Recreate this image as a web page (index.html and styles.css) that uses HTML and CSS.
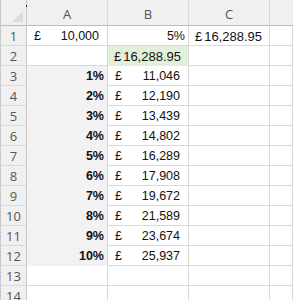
FILE: index.html
```html
<!DOCTYPE html>
<html>
<head>
<meta charset="utf-8">
<link rel="stylesheet" href="styles.css">
</head>
<body>
<div class="sheet">
  <div class="corner"><span class="dot"></span><span class="tri"></span></div>
  <div class="ch">A</div><div class="ch">B</div><div class="ch">C</div><div class="ch last"></div>

  <div class="rh">1</div>
  <div class="c acc"><span>£</span><span>10,000</span></div>
  <div class="c num pct">5%</div>
  <div class="c acc wide"><span>£</span><span>16,288.95</span></div>
  <div class="c"></div>

  <div class="rh">2</div>
  <div class="c"></div>
  <div class="c acc wide green"><span>£</span><span>16,288.95</span></div>
  <div class="c"></div>
  <div class="c"></div>

  <div class="rh">3</div><div class="c rate">1%</div><div class="c acc"><span>£</span><span>11,046</span></div><div class="c"></div><div class="c"></div>
  <div class="rh">4</div><div class="c rate">2%</div><div class="c acc"><span>£</span><span>12,190</span></div><div class="c"></div><div class="c"></div>
  <div class="rh">5</div><div class="c rate">3%</div><div class="c acc"><span>£</span><span>13,439</span></div><div class="c"></div><div class="c"></div>
  <div class="rh">6</div><div class="c rate">4%</div><div class="c acc"><span>£</span><span>14,802</span></div><div class="c"></div><div class="c"></div>
  <div class="rh">7</div><div class="c rate">5%</div><div class="c acc"><span>£</span><span>16,289</span></div><div class="c"></div><div class="c"></div>
  <div class="rh">8</div><div class="c rate">6%</div><div class="c acc"><span>£</span><span>17,908</span></div><div class="c"></div><div class="c"></div>
  <div class="rh">9</div><div class="c rate">7%</div><div class="c acc"><span>£</span><span>19,672</span></div><div class="c"></div><div class="c"></div>
  <div class="rh">10</div><div class="c rate">8%</div><div class="c acc"><span>£</span><span>21,589</span></div><div class="c"></div><div class="c"></div>
  <div class="rh">11</div><div class="c rate">9%</div><div class="c acc"><span>£</span><span>23,674</span></div><div class="c"></div><div class="c"></div>
  <div class="rh">12</div><div class="c rate">10%</div><div class="c acc"><span>£</span><span>25,937</span></div><div class="c"></div><div class="c"></div>
  <div class="rh">13</div><div class="c"></div><div class="c"></div><div class="c"></div><div class="c"></div>
  <div class="rh">14</div><div class="c"></div><div class="c"></div><div class="c"></div><div class="c"></div>
</div>
</body>
</html>
```

FILE: styles.css
```css
html, body {
  margin: 0;
  padding: 0;
  background: #fff;
  overflow: hidden;
}
.sheet {
  display: grid;
  grid-template-columns: 27px 81px 81px 81px 1fr;
  grid-template-rows: 26px repeat(14, 20px);
  width: 293px;
  font-family: "Liberation Sans", Arial, sans-serif;
  font-size: 12.5px;
  color: #111;
}
.sheet > div {
  box-sizing: border-box;
  border-right: 1px solid #d9d9d9;
  border-bottom: 1px solid #d9d9d9;
}
.corner {
  position: relative;
  background: #f0f0f0;
  border-right-color: #c8c8c8 !important;
  border-bottom-color: #bdbdbd !important;
  border-left: 1px solid #c8c8c8;
}
.corner .tri {
  position: absolute;
  right: 3px;
  bottom: 3px;
  width: 0;
  height: 0;
  border-left: 11px solid transparent;
  border-bottom: 11px solid #dcdcdc;
}
.corner .dot {
  position: absolute;
  right: -1px;
  top: 5px;
  width: 1px;
  height: 2px;
  background: #222;
}
.ch {
  background: #f0f0f0;
  font-family: "Open Sans", "Noto Sans", sans-serif;
  font-size: 13px;
  color: #555;
  display: flex;
  align-items: center;
  justify-content: center;
  padding-top: 3px;
  border-bottom-color: #bdbdbd !important;
}
.ch.last { border-right: none !important; }
.rh {
  background: #f0f0f0;
  font-family: "Open Sans", "Noto Sans", sans-serif;
  font-size: 13px;
  color: #555;
  display: flex;
  align-items: center;
  justify-content: center;
  border-left: 1px solid #c8c8c8;
  border-right-color: #c8c8c8 !important;
}
.c {
  display: flex;
  align-items: center;
  padding-top: 1px;
}
.c:nth-child(5n+1) { border-right: none; }
.acc {
  justify-content: space-between;
  padding-left: 7px;
  padding-right: 8px;
}
.acc.wide {
  font-size: 13px;
  padding-left: 6px;
  padding-right: 7px;
}
.num {
  justify-content: flex-end;
  padding-right: 3px;
}
.rate {
  justify-content: flex-end;
  padding-right: 3px;
  font-weight: bold;
  background: #f2f2f2;
  border-bottom-color: #f2f2f2 !important;
}
.green {
  background: #e2efda;
  border-bottom-color: #e2efda !important;
}
```
